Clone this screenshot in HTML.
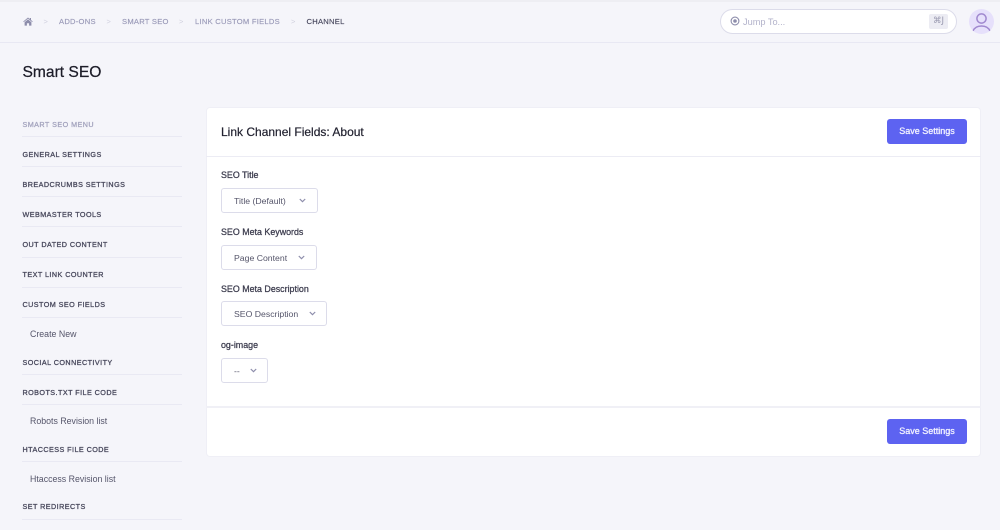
<!DOCTYPE html>
<html><head><meta charset="utf-8">
<style>
*{box-sizing:border-box}
html,body{margin:0;padding:0;width:1000px;height:530px;overflow:hidden;background:#f5f5fa;font-family:"Liberation Sans",sans-serif}
#w{position:absolute;left:0;top:0;width:1000px;height:530px;filter:blur(.3px)}
.a{position:absolute;white-space:nowrap}
.bc{font-size:7.6px;letter-spacing:.25px;top:16.5px;line-height:10px;color:#9a9ab8;-webkit-text-stroke:.15px #9a9ab8}
.sep{font-size:7.5px;top:16.5px;line-height:10px;color:#d0d0de}
.nav{left:22.5px;font-size:7.2px;letter-spacing:.45px;color:#4a4a5e;line-height:10px;-webkit-text-stroke:.3px #4a4a5e}
.ln{left:22px;width:160px;height:1px;background:#e9e9f3}
.sub{left:30px;font-size:8.8px;color:#55556a;line-height:12px}
.lb{left:221px;font-size:8.9px;color:#3a3a4c;line-height:12px;-webkit-text-stroke:.25px #3a3a4c}
.sel{left:221px;height:25px;background:#fff;border:1px solid #dcdcea;border-radius:3px}
.sel span{position:absolute;left:12px;top:6px;font-size:8.7px;line-height:12px;color:#55556a}
.sel svg{position:absolute;top:9px}
.btn{left:887px;width:80px;height:25px;background:#5d63f1;border-radius:3px;color:#f2f2ff;font-size:9px;text-align:center;line-height:25px;-webkit-text-stroke:.3px #f2f2ff}
</style></head><body><div id="w">
<div class="a" style="left:0;top:0;width:1000px;height:2px;background:#eeeef3"></div>
<div class="a" style="left:0;top:42px;width:1000px;height:1px;background:#e8e8f3"></div>

<svg class="a" style="left:23px;top:17px" width="10" height="9" viewBox="0 0 10 9"><path d="M5 .5 .3 4.500l.5.6L5 1.600l4.200 3.500.5-.6L8 3V1H6.800v1L5 .5zM1.600 5.200V8.600h2.300V6.200h2.200v2.400h2.300V5.200L5 2.400z" fill="#8d8dab"/></svg>
<div class="a sep" style="left:43.500px">&gt;</div>
<div class="a bc" style="left:59px">ADD-ONS</div>
<div class="a sep" style="left:106.500px">&gt;</div>
<div class="a bc" style="left:122px">SMART SEO</div>
<div class="a sep" style="left:179px">&gt;</div>
<div class="a bc" style="left:195px">LINK CUSTOM FIELDS</div>
<div class="a sep" style="left:291px">&gt;</div>
<div class="a bc" style="left:306.500px;color:#4a4a60;-webkit-text-stroke:.15px #4a4a60">CHANNEL</div>

<div class="a" style="left:720px;top:9px;width:237px;height:25px;background:#fff;border:1px solid #dcdcea;border-radius:13px"></div>
<svg class="a" style="left:730px;top:16px" width="10" height="10" viewBox="0 0 10 10"><circle cx="5" cy="5" r="3.900" fill="none" stroke="#8d8dab" stroke-width="1.100"/><circle cx="5" cy="5" r="1.800" fill="#8d8dab"/></svg>
<div class="a" style="left:743px;top:15.500px;font-size:9.200px;line-height:12px;color:#b3b3cb">Jump To...</div>
<div class="a" style="left:929px;top:14px;width:19px;height:15px;background:#ececf3;border-radius:2px;font-size:8.500px;line-height:15px;text-align:center;color:#9a9ab0;font-family:'DejaVu Sans',sans-serif">⌘J</div>
<svg class="a" style="left:969px;top:9px" width="25" height="25" viewBox="0 0 25 25"><defs><clipPath id="c"><circle cx="12.500" cy="12.500" r="12.500"/></clipPath></defs><circle cx="12.500" cy="12.500" r="12.500" fill="#e6e0fb"/><g clip-path="url(#c)" fill="none" stroke="#a088cf" stroke-width="1.500"><circle cx="12.500" cy="9.500" r="4.600"/><path d="M4 22c1.500-3.500 5-5 8.500-5s7 1.500 8.500 5"/></g></svg>

<div class="a" style="left:22.500px;top:64px;font-size:15.600px;line-height:18px;color:#1c1c28;-webkit-text-stroke:.25px #1c1c28">Smart SEO</div>

<div class="a nav" style="top:119.500px;color:#a5a5bf;-webkit-text-stroke:.3px #a5a5bf">SMART SEO MENU</div><div class="a ln" style="top:136px"></div>
<div class="a nav" style="top:149.500px">GENERAL SETTINGS</div><div class="a ln" style="top:166px"></div>
<div class="a nav" style="top:179.500px">BREADCRUMBS SETTINGS</div><div class="a ln" style="top:196px"></div>
<div class="a nav" style="top:209.500px">WEBMASTER TOOLS</div><div class="a ln" style="top:226px"></div>
<div class="a nav" style="top:239.500px">OUT DATED CONTENT</div><div class="a ln" style="top:257px"></div>
<div class="a nav" style="top:269.500px">TEXT LINK COUNTER</div><div class="a ln" style="top:287px"></div>
<div class="a nav" style="top:299.500px">CUSTOM SEO FIELDS</div><div class="a ln" style="top:317px"></div>
<div class="a sub" style="top:328px">Create New</div>
<div class="a nav" style="top:357.500px">SOCIAL CONNECTIVITY</div><div class="a ln" style="top:374px"></div>
<div class="a nav" style="top:387.500px">ROBOTS.TXT FILE CODE</div><div class="a ln" style="top:404px"></div>
<div class="a sub" style="top:415px">Robots Revision list</div>
<div class="a nav" style="top:444.500px">HTACCESS FILE CODE</div><div class="a ln" style="top:461px"></div>
<div class="a sub" style="top:473px">Htaccess Revision list</div>
<div class="a nav" style="top:501.500px">SET REDIRECTS</div><div class="a ln" style="top:519px"></div>

<div class="a" style="left:206px;top:107px;width:775px;height:350px;background:#fff;border:1px solid #efeff6;border-radius:4px"></div>
<div class="a" style="left:206px;top:156px;width:775px;height:1px;background:#ececf4"></div>
<div class="a" style="left:206px;top:406px;width:775px;height:2px;background:#f0f0f6"></div>
<div class="a" style="left:221px;top:125px;font-size:12px;line-height:14px;color:#222230;-webkit-text-stroke:.2px #222230">Link Channel Fields: About</div>
<div class="a btn" style="top:119px">Save Settings</div>
<div class="a btn" style="top:419px">Save Settings</div>

<div class="a lb" style="top:169px">SEO Title</div>
<div class="a sel" style="top:188px;width:97px"><span>Title (Default)</span><svg style="left:77px" width="7" height="5" viewBox="0 0 7 5"><path d="M.8 1 3.500 3.700 6.200 1" fill="none" stroke="#8d8dab" stroke-width="1.200"/></svg></div>
<div class="a lb" style="top:226px">SEO Meta Keywords</div>
<div class="a sel" style="top:245px;width:96px"><span>Page Content</span><svg style="left:76px" width="7" height="5" viewBox="0 0 7 5"><path d="M.8 1 3.500 3.700 6.200 1" fill="none" stroke="#8d8dab" stroke-width="1.200"/></svg></div>
<div class="a lb" style="top:283px">SEO Meta Description</div>
<div class="a sel" style="top:301px;width:106px"><span>SEO Description</span><svg style="left:87px" width="7" height="5" viewBox="0 0 7 5"><path d="M.8 1 3.500 3.700 6.200 1" fill="none" stroke="#8d8dab" stroke-width="1.200"/></svg></div>
<div class="a lb" style="top:339px">og-image</div>
<div class="a sel" style="top:358px;width:47px"><span>--</span><svg style="left:28px" width="7" height="5" viewBox="0 0 7 5"><path d="M.8 1 3.500 3.700 6.200 1" fill="none" stroke="#8d8dab" stroke-width="1.200"/></svg></div>
</div></body></html>
